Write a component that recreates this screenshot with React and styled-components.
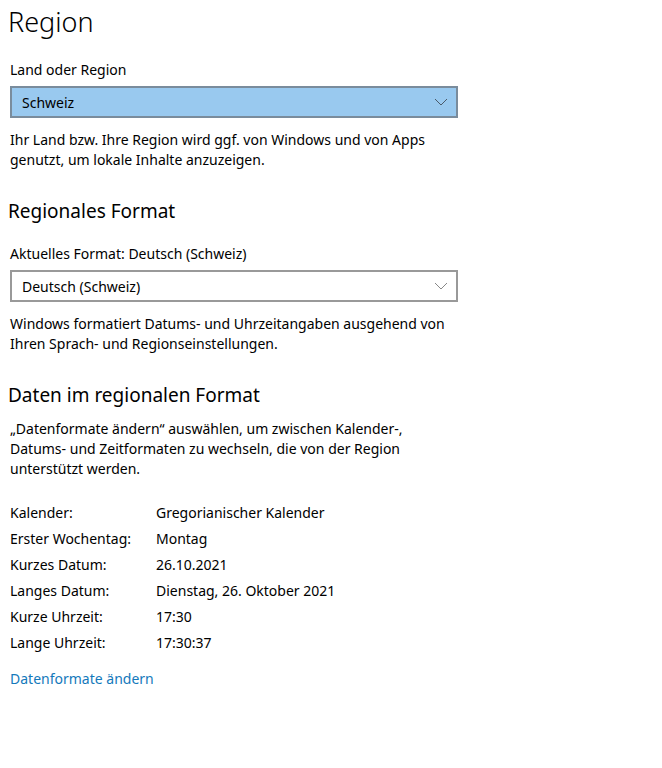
import React from "react";
import styled, { createGlobalStyle } from "styled-components";

const Global = createGlobalStyle`
  html, body { margin: 0; padding: 0; background: #fff; }
  body { font-family: "Segoe UI", "Noto Sans", "Open Sans", sans-serif; color: #000; }
`;

const Page = styled.div`
  width: 662px;
  height: 768px;
  padding: 0 0 0 10px;
  box-sizing: border-box;
  display: flex;
  flex-direction: column;
`;

const Title = styled.h1`
  margin: 4px 0 0 -2px;
  font-size: 27px;
  font-weight: 300;
  line-height: 36px;
`;

const SectionTitle = styled.h2`
  margin: ${(p) => p.$top}px 0 0 -2px;
  font-size: 19px;
  font-weight: 400;
  line-height: 26px;
`;

const Label = styled.div`
  margin-top: ${(p) => p.$top}px;
  font-size: 14px;
  line-height: 20px;
`;

const Text = styled.p`
  margin: ${(p) => p.$top}px 0 0 0;
  font-size: 14px;
  line-height: 20px;
  width: 448px;
`;

const Select = styled.div`
  margin-top: ${(p) => p.$top}px;
  width: 448px;
  height: 32px;
  box-sizing: border-box;
  border: 2px solid ${(p) => (p.$active ? "#7a8c9c" : "#999")};
  background: ${(p) => (p.$active ? "#99c9ef" : "#fff")};
  display: flex;
  align-items: center;
  justify-content: space-between;
  padding: 0 8px 0 10px;
  font-size: 14px;
`;

const Chevron = ({ color }) => (
  <svg width="14" height="8" viewBox="0 0 14 8">
    <path d="M1 1 L7 7 L13 1" fill="none" stroke={color} strokeWidth="1" />
  </svg>
);

const InfoGrid = styled.div`
  margin-top: 20px;
  display: grid;
  grid-template-columns: 146px auto;
  grid-auto-rows: 26px;
  align-items: center;
  font-size: 14px;
`;

const Link = styled.a`
  margin-top: 14px;
  font-size: 14px;
  line-height: 20px;
  color: #1479bb;
  text-decoration: none;
  cursor: pointer;
`;

const rows = [
  ["Kalender:", "Gregorianischer Kalender"],
  ["Erster Wochentag:", "Montag"],
  ["Kurzes Datum:", "26.10.2021"],
  ["Langes Datum:", "Dienstag, 26. Oktober 2021"],
  ["Kurze Uhrzeit:", "17:30"],
  ["Lange Uhrzeit:", "17:30:37"],
];

export default function App() {
  return (
    <Page>
      <Global />
      <Title>Region</Title>
      <Label $top={20}>Land oder Region</Label>
      <Select $active $top={6}>
        <span>Schweiz</span>
        <Chevron color="#4a5a6a" />
      </Select>
      <Text $top={12}>
        Ihr Land bzw. Ihre Region wird ggf. von Windows und von Apps genutzt, um lokale Inhalte anzuzeigen.
      </Text>
      <SectionTitle $top={28}>Regionales Format</SectionTitle>
      <Label $top={20}>Aktuelles Format: Deutsch (Schweiz)</Label>
      <Select $top={6}>
        <span>Deutsch (Schweiz)</span>
        <Chevron color="#888" />
      </Select>
      <Text $top={12}>
        Windows formatiert Datums- und Uhrzeitangaben ausgehend von Ihren Sprach- und Regionseinstellungen.
      </Text>
      <SectionTitle $top={28}>Daten im regionalen Format</SectionTitle>
      <Text $top={11}>
        „Datenformate ändern“ auswählen, um zwischen Kalender-, Datums- und Zeitformaten zu wechseln, die von der Region unterstützt werden.
      </Text>
      <InfoGrid>
        {rows.map(([k, v]) => (
          <React.Fragment key={k}>
            <span>{k}</span>
            <span>{v}</span>
          </React.Fragment>
        ))}
      </InfoGrid>
      <Link>Datenformate ändern</Link>
    </Page>
  );
}
